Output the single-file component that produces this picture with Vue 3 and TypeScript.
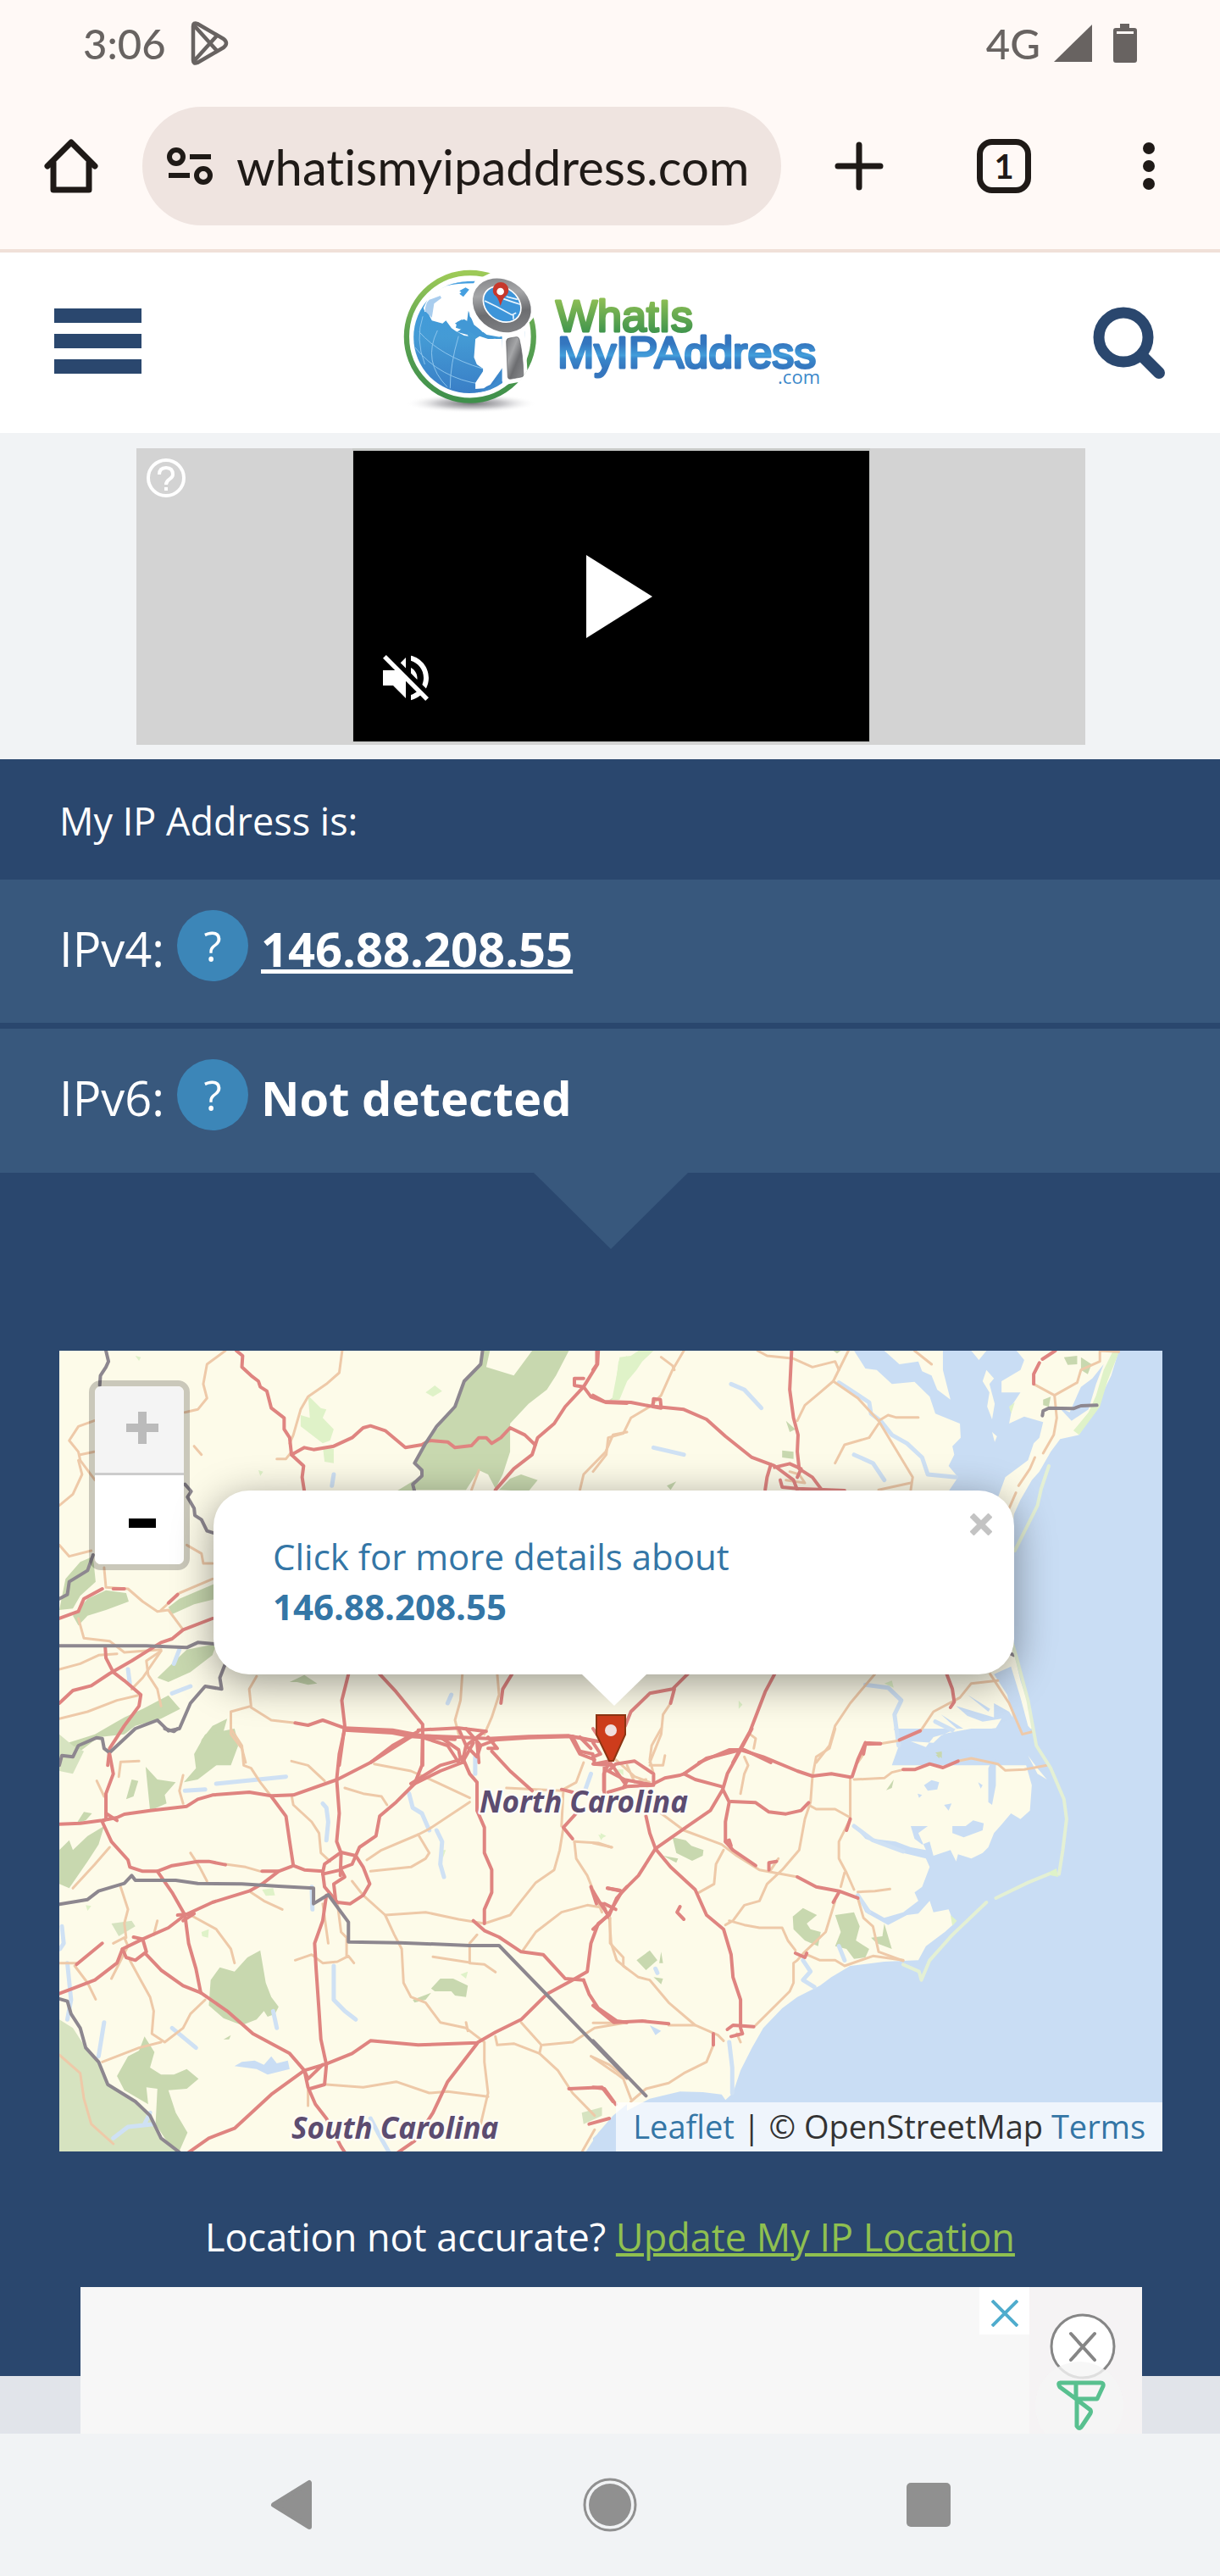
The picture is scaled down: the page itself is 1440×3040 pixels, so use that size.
<script setup lang="ts">
import { ref } from 'vue'

interface Area { fill: string; d: string }
interface Tile { id: string; transform: string; areas: Area[]; rivers: string[]; minor: string[]; major: string[]; borders: string[] }

const address = ref('whatismyipaddress.com')
const ip = '146.88.208.55'
const forest = '#c8d8af'
const park = '#dff2c8'
const water = '#c9ddf4'
const land = '#fdfbe9'

/* The basemap is stored as four quadrants, each in its own survey grid. */
const tiles: Tile[] = [
  {
    id: 'nw',
    transform: 'translate(60 1580) scale(.43367 .33333)',
    areas: [
      { fill: forest, d: 'M1175 42L1195 42 1185 100 1260 130 1310 42 1410 42 1375 130 1350 180 1300 230 1250 300 1250 400 1230 480 1210 530 1190 480 1165 465 1130 535 990 535 985 515 1010 480 990 440 1020 370 1100 240 1125 150 1170 90ZM1220 535L1250 495 1280 480 1325 500 1300 540ZM940 540L990 500 990 540ZM23 960L40 850 80 790 115 770 122 860 80 910 60 955ZM60 980L100 920 150 890 205 900 212 930 150 960 100 980 75 1015ZM320 950L350 920 450 865 450 920 390 940 330 975ZM290 1200L330 1150 370 1100 450 1080 440 1120 380 1180 320 1215ZM23 1440L120 1400 200 1340 250 1310 320 1262 352 1310 300 1345 230 1370 200 1400 130 1410 60 1480 23 1470ZM400 1510L410 1420 440 1370 480 1345 470 1390 510 1440 490 1510ZM650 1215L690 1190 725 1220 700 1225 670 1215ZM1520 215L1545 200 1545 215Z' },
      { fill: park, d: 'M700 200L735 245 750 250 740 280 770 320 760 360 740 370 680 310 680 270 705 280ZM740 380L770 390 770 440 745 435ZM1020 190L1045 165 1065 185 1040 205ZM1545 80L1568 60 1560 130 1550 200 1535 190ZM230 60L245 65 240 78ZM565 465L578 470 570 485Z' },
    ],
    rivers: ['M350 1100L335 1150', 'M380 1230L330 1255', 'M1090 1260L1080 1290', 'M210 1170L215 1220', 'M770 480L765 520'],
    minor: ['M475 42L425 90 415 160 425 210 400 250 365 260', 'M793 42L785 120 750 160 700 205 680 250 660 340 650 370', 'M118 290L75 310 50 360 75 400 80 430 120 500', 'M75 430L85 480 60 550 23 590', 'M80 410L118 400', 'M370 730L410 760 415 795 440 795', 'M145 810L150 880 210 885 250 930 290 965 320 960 360 1030', 'M300 960L350 900 440 850', 'M75 990L90 1060 160 1070 200 1110 300 1100', 'M23 1170L80 1150 130 1120 180 1115', 'M300 1105L260 1140 265 1190 290 1240 300 1300', 'M300 1105L250 1200 220 1240', 'M23 1345L100 1320 180 1280 245 1260', 'M560 1195L540 1240 545 1300 490 1320 490 1400 520 1450 530 1500', 'M545 1305L600 1350 665 1360', 'M1120 1187L1115 1280 1100 1350 1110 1400', 'M1215 1187L1220 1260 1200 1340 1180 1400', 'M1165 465L1145 535', 'M1568 330L1530 340 1510 400 1450 480 1440 535', 'M615 425L640 425 655 400', 'M390 380L410 410', 'M23 730L50 770 110 750'],
    major: ['M505 42L522 60 520 100 545 130 565 150 570 170 588 185 600 245 635 280 635 320 650 350 655 410 688 450 684 490 690 540', 'M655 410L690 385 715 392 770 380 820 350 850 315 870 308 910 325 965 385 1010 375 1030 360 1080 365 1100 385 1145 378 1165 350 1185 350 1200 370 1225 350 1250 315 1290 340 1318 375', 'M1490 42L1488 90 1450 170 1400 240 1370 300 1325 350 1310 410 1260 460 1210 535', 'M1450 170L1425 165 1425 140 1450 140M1450 170L1470 205 1510 225 1568 228', 'M23 1290L60 1245 110 1228 160 1185 220 1140 300 1075 330 1062 360 1030 440 990', 'M148 1090L150 1130 170 1180 200 1210 245 1260 240 1300 200 1370 175 1420 160 1450 155 1510', 'M23 990L75 965 90 920 140 885', 'M320 935L345 905M170 885L200 885', 'M810 1187L792 1280 800 1370 785 1510', 'M895 1187L940 1250 1012 1365 1012 1510', 'M665 1360L700 1368 740 1350 800 1378 930 1385 1010 1405 1110 1410 1190 1415 1300 1408 1410 1405 1480 1425', 'M1000 1390L930 1440 870 1500', 'M1255 1187L1230 1240 1225 1290', 'M1000 1385L1110 1378 1185 1390', 'M1010 1410L1080 1440 1110 1500M1110 1380L1130 1440 1180 1390M1150 1430L1120 1500M1160 1430L1165 1500M1190 1410L1215 1450 1190 1450', 'M1415 1410L1440 1470 1480 1490M1440 1410L1470 1450'],
    borders: ['M150 42L157 80 150 100 135 130 133 165', 'M1175 42L1170 90 1125 150 1100 240 1050 310 1020 370 990 440 1010 465 1010 485 985 515 990 540', 'M365 515L382 540 372 560 390 600 392 625 410 640 425 680 445 688', 'M115 765L100 820 50 860 45 905 23 920', 'M23 1087L260 1087 370 1093 400 1075 445 1080', 'M475 1150L460 1200 465 1240 420 1230 380 1290 350 1380 320 1388 290 1350 230 1380 160 1465 145 1450 140 1415 125 1412 75 1440 60 1480 30 1475 23 1510'],
  },
  {
    id: 'ne',
    transform: 'translate(700 1580) scale(.44643 .33333)',
    areas: [
      { fill: water, d: 'M690 42L720 105 750 110 790 160 850 152 890 205 905 265 970 300 972 350 950 380 955 410 940 450 965 490 940 540 1060 600 1090 490 1150 430 1165 370 1180 350 1190 295 1140 275 1100 300 1110 230 1130 190 1080 190 1080 150 1130 110 1140 75 1120 42 1040 42 1020 75 1000 42 925 42 925 110 945 215 910 180 895 130 870 115 860 80 810 90 770 42Z' },
      { fill: water, d: 'M1390 42L1370 130 1330 240 1285 340 1235 355 1210 400 1180 470 1160 500 1130 570 1113 620 1100 800 1113 1110 1130 1210 1155 1310 1165 1400 1215 1505 1568 1505 1568 42Z' },
      { fill: water, d: 'M1230 240L1260 260 1290 170 1320 140 1350 90 1330 160 1310 250 1265 290Z' },
      { fill: water, d: 'M790 1510L810 1435 870 1470 930 1420 1000 1390 1065 1378 1080 1345 1030 1355 990 1335 960 1300 1060 1340 1060 1290 1100 1320 1110 1340 1095 1260 1060 1187 1105 1160 1130 1270 1150 1370 1170 1400 1200 1510Z' },
      { fill: water, d: 'M920 1330L985 1385 970 1390ZM990 1260L1050 1310 1045 1320Z' },
      { fill: land, d: 'M1040 110L1060 140 1048 160 1062 230 1055 285 1042 240 1048 190 1030 150ZM1055 330L1068 345 1062 365Z' },
      { fill: park, d: 'M50 215L65 110 70 65 100 60 120 42 160 42 130 80 115 110 90 150 70 215ZM1375 42L1392 42 1360 150 1340 240 1285 340 1270 325 1310 260 1330 200 1350 110ZM1100 240L1115 225 1105 265ZM770 1220L790 1210 795 1235ZM385 1280L395 1295 385 1310Z' },
      { fill: forest, d: 'M1245 65L1280 60 1280 90 1255 92ZM1290 65L1318 90 1308 125 1290 110ZM195 520L220 505 205 535ZM1190 215L1210 205 1205 240 1190 235ZM510 290L535 320 520 330ZM500 395L530 400 530 425 500 420ZM900 1465L925 1460 915 1485ZM635 42L655 42 645 52Z' },
    ],
    rivers: ['M365 160L400 180 445 245', 'M650 155L730 225 735 265 760 290 790 340 830 370 870 420 885 480 960 490', 'M720 1225L780 1235 815 1280 797 1330 808 1440', 'M690 410L740 440 770 500', 'M160 385L240 410', 'M905 1355L950 1385'],
    minor: ['M240 42L210 110 180 200 150 240 100 280 80 335 40 350 35 410 0 470', 'M180 65L210 95 215 110', 'M435 42L460 60 530 70 580 100 640 80 650 110', 'M675 42L635 150 600 190 560 235 540 290', 'M635 150L700 210 755 290 800 390 845 490 840 535', 'M755 290L780 270 800 278 860 278', 'M755 300L730 350 665 375 640 440', 'M850 42L895 90', 'M755 535L840 510', 'M1165 160L1220 200 1280 155 1290 110 1340 80 1340 42 1390 46', 'M1220 200L1226 280 1218 340 1190 405', 'M1168 420L1155 460 1125 520M1118 545L1100 600', 'M205 1290L185 1330 180 1400 150 1500', 'M745 1187L680 1290 640 1370 625 1440 590 1500', 'M1050 1187L1100 1290 1135 1400 1165 1390', 'M1070 1210L1000 1220 970 1270 900 1320 865 1390 810 1422 760 1433', 'M415 1400L430 1415 425 1450', 'M715 1470L700 1500', 'M520 470L545 480 560 510 510 500'],
    major: ['M10 42L10 90 0 110', 'M0 200L30 222 100 225 150 238 240 250 300 285 350 345 420 420 480 450 530 500 540 535', 'M525 42L520 180 530 280 542 340 540 400 545 460 580 490 605 535', 'M160 212L178 215 180 245 158 240Z', 'M470 445L460 490 455 535', 'M480 455L520 442 550 460 540 490', 'M495 500L500 525 540 530 665 537', 'M1222 42L1188 72M1180 85L1165 125 1165 160', 'M250 1187L210 1240 150 1255 100 1320 85 1370', 'M215 1240L205 1290', 'M480 1187L455 1250 415 1390 390 1450 370 1500', 'M280 1500L360 1455 400 1455 470 1500', 'M935 1187L950 1240 955 1285 945 1305', 'M865 1388L810 1420', 'M760 1433L720 1435 715 1470', 'M0 1430L20 1470 0 1480'],
    borders: ['M1188 272L1190 255 1205 245 1270 247 1290 237 1332 235', 'M1098 1110L1112 1120'],
  },
  {
    id: 'sw',
    transform: 'translate(60 2040) scale(.43367 .33333)',
    areas: [
      { fill: '#d6e3c0', d: 'M23 1030L60 1060 95 1130 130 1180 155 1260 230 1320 270 1370 300 1450 355 1510 23 1510Z' },
      { fill: forest, d: 'M435 890L460 845 500 860 535 810 570 785 585 900 600 950 620 985 610 1010 590 1020 580 1000 560 1030 520 1050 470 1025 430 980ZM180 1230L210 1160 240 1140 255 1090 282 1145 270 1200 300 1225 335 1225 370 1205 402 1240 370 1275 320 1280 340 1360 372 1430 345 1510 310 1450 285 1400 290 1275 260 1270 265 1330 200 1280ZM23 430L50 395 60 430 100 380 145 345 130 410 100 470 50 565 23 550ZM258 135L290 180 340 190 310 235 315 265 270 290ZM362 190L395 140 390 90 420 20 500 0 510 50 490 90 440 140 400 180ZM205 250L220 180 238 185 225 240ZM1035 920L1060 885 1095 885 1135 910 1130 950 1100 945 1090 930 1045 930ZM70 335L90 295 112 300 95 325ZM985 960L1035 935 1020 960 990 970ZM470 1100L490 1085 485 1100Z' },
      { fill: '#d6e3c0', d: 'M23 20L60 60 90 80 60 160 23 150ZM165 690L220 680 230 700 185 735ZM1445 1360L1500 1340 1500 1370 1450 1400Z' },
      { fill: park, d: 'M575 570L605 565 610 590 585 592ZM410 720L430 710 428 740 412 735ZM1115 870L1135 860 1130 885ZM1490 375L1505 380 1498 395ZM1060 430L1075 430 1068 455ZM95 625L110 628 100 645Z' },
      { fill: water, d: 'M1450 1510L1490 1430 1530 1370 1568 1330 1568 1510Z' },
      { fill: water, d: 'M555 1175L580 1190 600 1160 615 1185 645 1175 650 1205 620 1215 590 1225 560 1205 500 1195 520 1180Z' },
    ],
    rivers: ['M740 265L750 280 755 330 750 395', 'M770 840L770 960 800 1000 830 1030', 'M1050 360L1065 400 1060 480 1070 525', 'M975 230L985 280 1010 300 1030 360', 'M330 1060L395 1130', 'M170 1450L210 1410 280 1400M270 1360L255 1400', 'M870 1380L890 1430 925 1510', 'M45 830L55 960 45 1030', 'M365 220L420 215', 'M605 1000L615 1060', 'M30 700L35 760 25 780', 'M450 195L640 170', 'M1470 160L1455 215', 'M145 1040L130 1160', 'M710 560L712 640', 'M1155 100L1155 160'],
    minor: ['M490 0L520 60 525 130 545 140 570 190 600 240', 'M655 235L660 270 710 330 730 370 735 440 760 470', 'M655 115L700 130 745 185', 'M800 210L850 230 900 240 915 270', 'M880 125L980 150 1050 190 1140 245', 'M1140 260L1030 355 1000 375 900 430 860 465', 'M1000 375L1030 440 1020 460 980 490 870 505', 'M820 540L850 590 910 660 935 730 955 780 960 900 980 950 1020 970 1060 1040 1130 1060 1180 1110 1180 1180 1190 1290 1170 1400', 'M910 660L1020 650 1110 675 1180 690 1250 660 1280 610 1320 545 1370 500 1385 430 1395 350', 'M1160 730L1140 760 1140 830 1180 835 1210 862', 'M1040 808L1140 828', 'M475 480L530 490 570 505 620 505', 'M380 440L405 490 425 540', 'M160 420L120 480 60 565', 'M190 560L210 640 200 690 205 740', 'M215 820L240 880 270 950 280 1000 275 1080 310 1110 360 1060 380 1010 420 960', 'M380 660L450 710 490 780 500 830', 'M545 580L580 610 630 640', 'M665 820L710 800 740 830 780 825 810 805 825 830', 'M780 620L790 720 805 740 805 805', 'M740 620L755 760', 'M750 1260L850 1270 940 1250 1030 1290 1080 1285 1190 1303', 'M1280 1040L1335 1120 1330 1150 1380 1210 1420 1290 1480 1370', 'M1210 1090L1215 1120 1260 1115 1330 1150', 'M1340 1120L1420 1110 1480 1060 1568 1040', 'M1285 785L1320 720 1390 650 1460 625 1510 635', 'M1520 670L1525 760 1540 820 1568 850', 'M1425 400L1430 460 1460 520 1500 650', 'M1425 400L1490 405 1525 420', 'M23 830L70 830M65 840L100 900 122 958', 'M140 1180L240 1130 300 1110', 'M23 1155L80 1220 90 1310 110 1400 170 1470', 'M125 185L145 240', 'M240 115L190 118 185 170', 'M360 165L350 220 360 265', 'M1450 120L1430 190 1395 215 1390 345', 'M1470 1160L1520 1190 1568 1240', 'M1240 210L1390 220', 'M170 760L200 740 210 770 165 885', 'M700 1280L700 1335', 'M1480 1420L1445 1500', 'M290 680L280 730', 'M1130 1040L1135 1070'],
    major: ['M160 90L170 160 150 230 150 320 140 330 165 400 210 465 215 490 250 505 290 505 330 485 400 470 430 470 475 482', 'M23 338L80 335 140 325 180 315 200 303 270 290 370 275 400 250 440 235 540 225 600 238 660 235 780 180 870 120 930 70 985 25', 'M150 300L180 325', 'M600 240L640 310 650 400 660 485 690 500 740 505', 'M800 0L785 90 778 180 785 300 778 400 790 440 788 520', 'M800 5L930 15 980 28 1100 38', 'M1012 20L1010 130 990 195 1060 150 1120 120 1130 60', 'M1170 60L1210 40 1300 32 1420 28 1490 45', 'M1130 0L1170 60 1160 100 1130 60M1120 100L1140 160 1160 190 1160 290 1180 350 1180 440 1200 500 1200 580 1180 640 1180 690', 'M1060 30L1110 75 1115 110 1060 130 980 195', 'M1200 80L1250 150 1310 220', 'M1150 680L1180 715 1220 738 1280 790 1340 800 1400 885 1450 890', 'M990 195L940 260 895 310 885 380 840 420 820 480 790 495', 'M745 480L790 438 830 450 850 490 868 550 850 590 815 620 780 615 745 560 740 510Z', 'M740 515L790 500 800 525 770 550 775 605', 'M750 590L740 680 718 760 722 850 730 1000 735 1100 750 1190 745 1260 705 1275', 'M23 938L60 920 120 890 180 830 195 780 250 745 320 705 365 660 440 615 540 575 575 550 620 505 655 488', 'M575 505L620 505', 'M140 760L70 835', 'M195 780L205 810 230 820 260 790 250 745 225 738', 'M290 505L330 580 365 660 375 760 395 850 408 935', 'M345 660L390 655 360 680', 'M260 800L300 855 360 910 408 935 480 1000 550 1080 650 1150 690 1210 700 1270 720 1330 750 1380 790 1480 805 1510', 'M370 1505L430 1450 500 1415 600 1295 690 1210 750 1187 820 1150 870 1105 1000 1120 1160 1112 1210 1075 1280 1030 1350 940 1420 890 1460 860 1470 760 1490 690 1520 660 1540 600 1568 560', 'M690 1210L700 1240 740 1190', 'M1160 1115L1080 1250 1040 1360 990 1460 940 1505', 'M1450 890L1465 940 1490 990 1540 1035 1568 1040', 'M1420 28L1440 80 1475 90 1480 125 1520 115 1560 190', 'M1520 120L1505 160 1505 220', 'M1430 300L1395 350 1420 390', 'M1390 215L1420 225', 'M1410 1275L1500 1270 1530 1320', 'M1465 1400L1520 1380', 'M1470 560L1485 620M1515 565L1548 572M1500 620L1520 670'],
    borders: ['M23 622L100 605 130 575 200 548 220 520 230 537 340 537 400 548 520 550 620 558 715 565 715 620 755 588 810 685 810 755 950 758 1140 768 1220 768 1568 1235', 'M23 957L45 965 55 1010 80 1060 95 1130 130 1180 155 1260 230 1320 270 1370 300 1450 355 1505', 'M310 0L335 10 345 0'],
  },
  {
    id: 'se',
    transform: 'translate(700 2040) scale(.44643 .33333)',
    areas: [
      { fill: water, d: 'M795 0L815 60 800 98 900 97 940 78 1030 70 1060 95 1045 140 1045 260 1055 270 1065 200 1065 110 1090 85 1130 90 1145 130 1160 200 1155 290 1130 320 1105 300 1080 340 1060 370 1045 420 1030 440 1000 460 965 445 960 470 945 430 900 450 890 400 870 410 850 390 840 345 885 345 860 370 880 430 840 420 800 400 740 390 690 345 720 390 820 440 880 460 890 490 870 560 850 580 860 610 820 650 770 670 730 640 700 600 720 650 780 695 830 660 860 655 890 610 900 650 940 640 955 690 930 720 880 770 860 820 770 825 680 840 630 880 600 910 540 950 500 990 450 1060 420 1130 390 1210 370 1290 350 1315 340 1295 290 1287 230 1285 150 1310 80 1360 40 1400 0 1450 0 1510 1568 1510 1568 0Z' },
      { fill: land, d: 'M840 45L900 50 920 25 960 0 1000 0 940 15 900 30 880 65ZM1150 95L1175 140 1200 180 1175 160Z' },
      { fill: forest, d: 'M210 385L245 395 260 415 292 430 290 450 262 468 220 440ZM528 665L555 635 592 660 565 690 575 710 602 720 595 770 560 750 530 710ZM640 660L690 650 705 700 695 750 730 780 720 810 690 815 670 780 640 770 655 720ZM735 740L765 735 770 690 790 780 750 760ZM115 820L150 785 170 820 140 855ZM775 218L795 180 790 210ZM905 85L922 80 922 105ZM160 880L185 885 180 905ZM185 450L225 460 220 475ZM180 790L185 830 175 830Z' },
      { fill: park, d: 'M945 660L962 680 950 698ZM1195 515L1225 495 1230 525ZM60 145L80 145 80 165ZM20 370L35 380 20 390Z' },
      { fill: water, d: 'M875 200L895 182 915 190 910 215 885 220ZM950 345L985 345 1005 325 1033 335 1030 360 980 385 950 370ZM928 270L948 265 940 290ZM150 1050L180 1070 165 1085ZM858 230L870 235 862 245ZM1018 190L1030 200 1025 212Z' },
    ],
    rivers: ['M555 820L575 860 555 890 585 915', 'M360 1110L368 1200 368 1290', 'M690 345L740 395 820 435', 'M650 770L665 820', 'M700 590L730 650', 'M165 850L170 865'],
    minor: ['M180 0L155 60 150 110 160 160', 'M60 110L110 170 150 190M90 130L110 190 140 180M190 95L185 130 150 130', 'M640 0L625 70 590 100 580 170 575 260 560 320 545 430 500 500 460 550 440 610 400 625 370 680 350 695', 'M570 270L590 285 640 285 680 315', 'M680 172L680 320 650 400 650 460 670 510 690 570', 'M700 600L715 670 740 700 755 790 820 822', 'M690 180L770 175 790 155 820 145', 'M965 115L1000 105 1070 125 1090 148 1140 145 1200 130', 'M400 100L410 130 400 160 390 230', 'M180 300L240 360 340 410 380 450 440 500 540 525', 'M345 430L325 480 320 550 280 580', 'M360 680L400 695 440 705 500 705 515 750 535 785', 'M640 610L615 720 560 790 540 820 530 830 530 900 520 930 430 1050', 'M565 800L600 820 640 820 665 840 740 805 820 820', 'M665 510L655 560', 'M700 578L745 575 785 568', 'M45 670L45 760 80 810 80 840 120 880 150 890 200 970 270 1050 330 1085 345 1105', 'M0 1042L60 1042M200 1050L270 1050', 'M318 1120L300 1180 240 1220 200 1255 140 1275 100 1320', 'M0 1165L60 1220 80 1240 100 1310', 'M0 405L50 420', 'M470 500L490 460', 'M380 1080L390 1110'],
    major: ['M420 0L390 75 355 160 343 215 360 260 350 330 350 400 370 430 430 485', 'M240 160L300 105 390 75 450 100 540 150 580 168 630 160 680 172', 'M160 195L190 175 230 165 240 160 270 180 340 205', 'M343 215L310 290 245 350 165 425 120 520 75 580 40 660 0 710', 'M365 258L430 262 465 295 510 302 550 290 570 262', 'M140 310L150 370 165 425 205 490 270 570 300 660 345 710 365 800 370 880 390 960 390 1060 395 1080 365 1090', 'M355 1065L370 1050 425 1055', 'M350 400L360 395 365 415', 'M540 525L590 560 650 575 700 600', 'M650 580L635 615', 'M820 145L850 145 890 125 925 138 965 115', 'M680 320L670 360', 'M535 795L560 810 565 795', 'M720 50L700 110 685 170M720 50L760 53', 'M0 980L55 1040 130 1035 200 1045', 'M318 1080L318 1120', 'M0 1270L30 1275 60 1330', 'M465 500L465 475 485 470', 'M230 630L222 650 240 675', 'M30 130L30 230M45 145L60 125 110 115 160 160 160 200 90 205 40 225M40 150L90 185 80 210M0 125L50 130M80 180L160 200', 'M38 565L75 575M0 575L20 620 40 660M30 620L60 640', 'M0 0L20 40'],
    borders: ['M0 1105L140 1300'],
  },
]
</script>

<template>
  <div class="screen">
    <header class="browser">
      <div class="status">
        <div class="status-side">
          <span>3:06</span>
          <svg width="48" height="52" viewBox="0 0 48 52" fill="none" stroke="#686361" stroke-width="4.5" stroke-linejoin="round" aria-hidden="true">
            <path d="M4 6Q4 1 9 3L40 21Q46 26 40 31L9 49Q4 51 4 46ZM5 5L33 36M5 47L33 16" />
          </svg>
        </div>
        <div class="status-side right">
          <span>4G</span>
          <svg width="46" height="46" viewBox="0 0 46 46" aria-hidden="true"><path d="M0 45L45 1V45Z" fill="#686361" /></svg>
          <svg class="battery" width="28" height="46" viewBox="0 0 28 46" aria-hidden="true">
            <path d="M8 0H19V5H25Q28 5 28 8V43Q28 46 25 46H3Q0 46 0 43V8Q0 5 3 5H8Z" fill="#686361" /><path d="M4 9H24V12H4Z" fill="#fff9f6" />
          </svg>
        </div>
      </div>
      <nav class="toolbar" aria-label="Browser">
        <button type="button" aria-label="Home">
          <svg viewBox="0 0 64 64" fill="none" stroke="#1f1a17" stroke-width="7" stroke-linejoin="round" stroke-linecap="round">
            <path d="M4 32L32 4 60 32M11 28V60H53V28" />
          </svg>
        </button>
        <label class="omnibox">
          <svg width="54" height="44" viewBox="0 0 54 44" fill="none" stroke="#1f1a17" stroke-width="6" aria-hidden="true">
            <circle cx="11" cy="11" r="8" /><circle cx="43" cy="33" r="8" /><path d="M27 11H52M2 33H27" />
          </svg>
          <input v-model="address" type="text" aria-label="Address">
        </label>
        <div class="actions">
          <button type="button" aria-label="New tab">
            <svg viewBox="0 0 64 64" stroke="#1f1a17" stroke-width="7" stroke-linecap="round"><path d="M7 32H57M32 7V57" /></svg>
          </button>
          <button type="button" class="tabs" aria-label="1 open tab">1</button>
          <button type="button" aria-label="Menu">
            <svg viewBox="0 0 64 64" fill="#1f1a17"><circle cx="32" cy="11" r="7" /><circle cx="32" cy="32" r="7" /><circle cx="32" cy="53" r="7" /></svg>
          </button>
        </div>
      </nav>
    </header>

    <div class="site-head">
      <button type="button" class="burger" aria-label="Open menu"><i></i><i></i><i></i></button>
      <a href="#" class="logo" aria-label="WhatIsMyIPAddress.com">
        <svg width="520" height="200" viewBox="0 0 520 200">
          <defs>
            <linearGradient id="ring" x1="0" y1="0" x2="0" y2="1"><stop offset="0" stop-color="#9dca57" /><stop offset=".45" stop-color="#5da452" /><stop offset="1" stop-color="#3f904b" /></linearGradient>
            <linearGradient id="sea" x1="0" y1="0" x2="0" y2="1"><stop offset="0" stop-color="#3f9ade" /><stop offset=".5" stop-color="#449bd5" /><stop offset="1" stop-color="#397ec6" /></linearGradient>
            <linearGradient id="metal" x1="0" y1="0" x2="1" y2="1"><stop offset="0" stop-color="#77787b" /><stop offset=".35" stop-color="#a5a6a8" /><stop offset=".6" stop-color="#6c6d70" /><stop offset="1" stop-color="#8a8b8e" /></linearGradient>
            <linearGradient id="leaf" gradientUnits="userSpaceOnUse" x1="0" y1="53" x2="0" y2="93"><stop offset="0" stop-color="#8dbe54" /><stop offset="1" stop-color="#3f944d" /></linearGradient>
            <linearGradient id="sky" gradientUnits="userSpaceOnUse" x1="0" y1="96" x2="0" y2="145"><stop offset="0" stop-color="#3374bd" /><stop offset=".2" stop-color="#3476bf" /><stop offset=".48" stop-color="#429edb" /><stop offset=".55" stop-color="#3987cb" /><stop offset=".8" stop-color="#3576be" /></linearGradient>
            <radialGradient id="shade"><stop offset="0" stop-color="#77777c" /><stop offset=".5" stop-color="#c8c8cb" /><stop offset="1" stop-color="#fff" stop-opacity="0" /></radialGradient>
          </defs>
          <g transform="scale(.3316 .3333)">
            <ellipse cx="290" cy="528" rx="235" ry="34" fill="url(#shade)" />
            <circle cx="286" cy="292" r="226" fill="#fff" stroke="url(#ring)" stroke-width="19" />
            <circle cx="283" cy="294" r="198" fill="url(#sea)" />
            <g fill="none" stroke="#8cc4ec" stroke-width="3">
              <path d="M105 275Q180 360 330 405M90 330Q180 440 325 460M170 270Q115 380 205 470M245 290Q215 390 215 475M118 220Q90 300 125 390" />
            </g>
            <path d="M145 150Q190 100 305 92L400 150 400 290 370 300 345 288 330 290 318 268 300 262 283 245 278 195 290 245 265 230 240 240 235 260 265 270 280 290 265 288 235 272 220 262 200 235 188 245 150 235 140 215 150 190 125 205 120 190 135 160Z" fill="#fff" />
            <path d="M200 112Q245 95 305 95L300 103Q240 103 200 112ZM248 130L270 118 283 125 262 151 248 140 255 135Z" fill="#459fe0" />
            <path d="M125 200Q130 160 150 158L180 147 184 155 158 175 150 225Z" fill="#a9cdee" />
            <path d="M232 245L255 232 275 238 280 200 300 250 345 285 400 295 350 303 310 290 280 270 275 285 240 275 260 262Z" fill="#4298d5" />
            <path d="M305 300L320 290 350 300 400 300 403 400 358 462 345 468 335 475 305 477 305 455 332 415 332 405 310 390 300 365Z" fill="#fff" />
            <path d="M345 474Q385 455 401 418V456Q360 486 310 490Z" fill="#3f8bcd" />
            <path d="M383 55L480 110 520 160 512 225 480 260 490 412 462 452 410 462 400 450 400 292 330 275 285 220 280 140 305 92Z" fill="#fff" />
            <ellipse cx="399" cy="181" rx="109" ry="90" transform="rotate(32 399 181)" fill="url(#metal)" />
            <ellipse cx="400" cy="177" rx="75" ry="60" transform="rotate(38 400 177)" fill="#fff" />
            <ellipse cx="400" cy="177" rx="70" ry="55" transform="rotate(38 400 177)" fill="#3d95d9" />
            <path d="M338 165L380 185 435 215 450 208M405 158L440 170 465 178M415 150L455 160M440 215L440 230" fill="none" stroke="#e8f5ff" stroke-width="5" />
            <path d="M394 183Q386 150 372 143A28 28 0 1 1 418 143Q403 152 394 183Z" fill="#c7382c" />
            <circle cx="394" cy="132" r="13" fill="#fff" />
            <path d="M415 308Q416 298 426 297L450 293Q458 292 461 300 474 350 476 425 477 434 468 435L430 442Q421 443 420 434Z" fill="url(#metal)" stroke="#626366" stroke-width="2" />
          </g>
          <g font-family="Liberation Sans, Arial, sans-serif" font-size="52" stroke-linejoin="round" stroke-width="3">
            <text x="196" y="91" fill="url(#leaf)" stroke="url(#leaf)">WhatIs</text>
            <text x="198" y="134" fill="url(#sky)" stroke="url(#sky)">MyIPAddress</text>
          </g>
          <text x="508" y="153" text-anchor="end" font-family="Open Sans, sans-serif" font-size="22" fill="#3c88ca">.com</text>
        </svg>
      </a>
      <button type="button" class="search" aria-label="Search">
        <svg width="86" height="86" viewBox="0 0 86 86" fill="none" stroke="#2a476e">
          <circle cx="36" cy="36" r="29" stroke-width="13" /><path d="M58 58L78 78" stroke-width="14" stroke-linecap="round" />
        </svg>
      </button>
    </div>

    <section class="promo" aria-label="Video">
      <div class="promo-box">
        <button type="button" class="about" aria-label="About this ad">
          <svg width="48" height="48" viewBox="0 0 48 48" fill="none" stroke="#fff" stroke-width="4"><circle cx="24" cy="24" r="21" /><path d="M16 20Q16 12 24 12T32 20C32 26 24 25 24 32M24 35V39" /></svg>
        </button>
        <div class="video">
          <button type="button" class="play" aria-label="Play"><svg width="78" height="98" viewBox="0 0 78 98"><path d="M0 0L78 49 0 98Z" fill="#fff" /></svg></button>
          <button type="button" class="mute" aria-label="Unmute">
            <svg width="54" height="54" viewBox="3 3 18 18" fill="#fff"><path d="M16.500 12c0-1.770-1.020-3.290-2.500-4.030v2.210l2.450 2.450c.03-.2.050-.41.050-.63zm2.500 0c0 .94-.2 1.820-.54 2.640l1.510 1.510C20.630 14.910 21 13.500 21 12c0-4.280-2.990-7.860-7-8.770v2.060c2.890.86 5 3.540 5 6.710zM4.270 3L3 4.270 7.730 9H3v6h4l5 5v-6.730l4.250 4.250c-.67.52-1.420.93-2.250 1.180v2.060c1.380-.31 2.630-.95 3.690-1.810L19.730 21 21 19.730l-9-9L4.270 3zM12 4L9.910 6.090 12 8.180V4z" /></svg>
          </button>
        </div>
      </div>
    </section>

    <main>
      <section class="panel">
        <h1>My IP Address is:</h1>
        <div class="row">
          <span>IPv4:</span><button type="button" class="hint" aria-label="What is IPv4?">?</button><a href="#" class="value">{{ ip }}</a>
        </div>
        <div class="row last">
          <span>IPv6:</span><button type="button" class="hint" aria-label="What is IPv6?">?</button><span class="value">Not detected</span>
        </div>

        <div class="map">
          <svg class="basemap" viewBox="70 1594 1302 945" preserveAspectRatio="xMidYMid slice" role="img" aria-label="Map of North Carolina">
            <rect x="70" y="1594" width="1302" height="945" :fill="land" />
            <g v-for="t in tiles" :key="t.id" :transform="t.transform">
              <path v-for="(a, i) in t.areas" :key="i" :d="a.d" :fill="a.fill" />
            </g>
            <g v-for="t in tiles" :key="t.id" :transform="t.transform" class="lines">
              <path v-for="(d, i) in t.rivers" :key="'w' + i" :d="d" class="river" />
              <path v-for="(d, i) in t.minor" :key="'m' + i" :d="d" class="minor" />
              <path v-for="(d, i) in t.major" :key="'r' + i" :d="d" class="major" />
              <path v-for="(d, i) in t.borders" :key="'b' + i" :d="d" class="border" />
            </g>
            <g class="lines" fill="none" transform="translate(700 2040) scale(.44643 .33333)">
              <path class="banks" d="M1100 -340L1120 -250 1150 -100 1172 60 1210 140 1245 250 1252 320 1242 430 1232 515M1205 515L1150 545 1065 600M1040 615L950 730 890 820 868 890 862 860 820 835" />
            </g>
            <g class="lines" fill="none" transform="translate(700 1580) scale(.44643 .33333)">
              <path class="banks" d="M1205 450L1185 530 1175 590 1145 670 1115 750" />
            </g>
            <g class="place">
              <text x="566" y="2139">North Carolina</text>
              <text x="344" y="2524">South Carolina</text>
            </g>
            <path d="M704 2024H738V2047L724 2078H719L704 2047Z" fill="#cd3c1c" stroke="#8c3513" stroke-width="2" />
            <circle cx="721" cy="2042" r="7" fill="#f0dfdf" />
          </svg>

          <div class="zoom">
            <button type="button" aria-label="Zoom in" disabled><svg width="38" height="38" viewBox="0 0 38 38"><path d="M14 0H24V14H38V24H24V38H14V24H0V14H14Z" fill="#bbb" /></svg></button>
            <button type="button" aria-label="Zoom out"><svg width="32" height="38" viewBox="0 0 32 38"><path d="M0 17H32V28H0Z" /></svg></button>
          </div>

          <div class="popup">
            <a href="#">Click for more details about<br><b>{{ ip }}</b></a>
            <button type="button" class="close" aria-label="Close popup"><svg width="26" height="26" viewBox="0 0 26 26" stroke="#c3c3c3" stroke-width="7"><path d="M2 2L24 24M24 2L2 24" /></svg></button>
          </div>

          <p class="credit"><a href="#">Leaflet</a> | © OpenStreetMap <a href="#">Terms</a></p>
        </div>

        <p class="update">Location not accurate? <a href="#">Update My IP Location</a></p>
      </section>
      <div class="below"></div>

      <aside class="banner" aria-label="Advertisement">
        <button type="button" class="banner-x" aria-label="Ad options">
          <svg width="32" height="32" viewBox="0 0 32 32" stroke="#4faccd" stroke-width="4"><path d="M1 1L31 31M31 1L1 31" /></svg>
        </button>
        <div class="banner-side">
          <svg width="133" height="173" viewBox="0 0 133 173" fill="none" aria-hidden="true">
            <circle cx="63" cy="70" r="37" fill="#fff" stroke="#868686" stroke-width="3" />
            <path d="M49 55L77 86M77 55L49 86" stroke="#868686" stroke-width="4" stroke-linecap="round" />
            <circle cx="59" cy="140" r="52" fill="#f5f5f5" fill-opacity=".8" />
            <path d="M36 113H84Q88 113 87 117L80 132H55M55 132V113M55 132L36 118Q33 113 37 113M55 132L72 145Q73 147 72 149L62 164Q59 169 56 164V134" stroke="#58c08f" stroke-width="5" stroke-linejoin="round" />
          </svg>
        </div>
      </aside>
    </main>

    <nav class="system" aria-label="System navigation">
      <button type="button" aria-label="Back"><svg viewBox="0 0 64 64"><path d="M53 6V58L11 32Z" fill="#909090" stroke="#909090" stroke-width="6" stroke-linejoin="round" /></svg></button>
      <button type="button" aria-label="Home"><svg viewBox="0 0 64 64"><circle cx="32" cy="32" r="30" fill="none" stroke="#909090" stroke-width="3" /><circle cx="32" cy="32" r="25" fill="#909090" /></svg></button>
      <button type="button" aria-label="Recent apps"><svg viewBox="0 0 64 64"><rect x="6" y="6" width="52" height="52" rx="5" fill="#909090" /></svg></button>
    </nav>
  </div>
</template>

<style>
body {
  background: #f1f3f5;
}
</style>

<style scoped>
* {
  box-sizing: border-box;
}
.screen {
  font-family: 'Open Sans', 'Noto Sans', sans-serif;
  color: #fff;
}
button {
  display: block;
  padding: 0;
  border: 0;
  background: none;
  font: inherit;
  color: inherit;
  flex: none;
}
svg {
  display: block;
}
p, h1 {
  margin: 0;
  font-weight: 400;
}
.browser {
  background: #fff9f6;
  border-bottom: 4px solid #f0e0d8;
  font-family: Lato, Roboto, sans-serif;
}
.status {
  display: flex;
  justify-content: space-between;
  align-items: center;
  height: 102px;
  padding: 0 98px;
  color: #686361;
  font-size: 49px;
  font-weight: 500;
}
.status-side {
  display: flex;
  align-items: center;
  gap: 28px;
}
.status-side.right {
  gap: 16px;
}
.battery {
  margin-left: 8px;
}
.toolbar {
  display: flex;
  align-items: center;
  height: 192px;
  padding: 24px 52px 28px;
}
.toolbar button {
  width: 64px;
  height: 64px;
}
.omnibox {
  display: flex;
  align-items: center;
  flex: 1;
  min-width: 0;
  height: 140px;
  margin: 0 60px 0 52px;
  padding: 0 12px 0 29px;
  gap: 28px;
  border-radius: 70px;
  background: #efe4e0;
}
.omnibox svg {
  flex: none;
}
.omnibox input {
  flex: 1;
  min-width: 0;
  padding: 0;
  border: 0;
  outline: 0;
  background: none;
  font: 400 58px Lato, Roboto, sans-serif;
  font-variant-ligatures: none;
  color: #1f1a17;
}
.actions {
  display: flex;
  gap: 107px;
}
.toolbar .tabs {
  border: 7px solid #1f1a17;
  border-radius: 18px;
  color: #1f1a17;
  font-size: 40px;
  font-weight: 700;
  line-height: 48px;
}
.site-head {
  display: grid;
  grid-template-columns: 1fr auto 1fr;
  align-items: center;
  height: 213px;
  padding: 2px 64px 11px;
  background: #fff;
}
.burger {
  display: grid;
  gap: 13px;
  width: 103px;
  margin-top: 4px;
}
.burger i {
  height: 17px;
  background: #2a476e;
}
.search {
  justify-self: end;
  margin-top: 10px;
}
.promo {
  padding: 18px 159px 17px 161px;
  background: #f1f3f5;
}
.promo-box {
  position: relative;
  height: 350px;
  background: #d3d3d3;
}
.about {
  position: absolute;
  left: 11px;
  top: 11px;
}
.video {
  position: relative;
  display: grid;
  place-items: center;
  width: 611px;
  height: 347px;
  margin: 0 auto;
  border: solid #c8cac8;
  border-width: 3px 1px 1px;
  background: #000;
}
.play {
  margin-left: 20px;
}
.mute {
  position: absolute;
  left: 35px;
  bottom: 48px;
}
main {
  position: relative;
}
.panel {
  padding-bottom: 105px;
  background: #2a476e;
}
h1 {
  padding: 4px 70px 0;
  font-size: 45px;
  line-height: 138px;
}
.row {
  position: relative;
  display: flex;
  gap: 15px;
  height: 169px;
  margin-bottom: 7px;
  padding: 36px 70px 0;
  background: #38587d;
  font-size: 56px;
  line-height: 90px;
}
.row.last {
  height: 170px;
  margin-bottom: 210px;
}
.row.last::after {
  content: '';
  position: absolute;
  left: 50%;
  top: 100%;
  margin-left: -90px;
  border: solid transparent;
  border-width: 90px 91px 0;
  border-top-color: #38587d;
}
.hint {
  width: 84px;
  height: 84px;
  border-radius: 50%;
  background: #3c86b8;
  font-size: 49px;
  line-height: 80px;
}
.value {
  color: #fff;
  font-weight: 700;
}
a.value {
  text-decoration-thickness: 5px;
  text-decoration-skip-ink: none;
}
.map {
  position: relative;
  margin: 0 68px 0 70px;
  aspect-ratio: 1302 / 945;
  overflow: hidden;
}
.basemap {
  width: 100%;
  height: 100%;
}
.lines path {
  fill: none;
  stroke-linejoin: round;
  stroke-linecap: round;
  vector-effect: non-scaling-stroke;
}
.lines .river {
  stroke: #cfe1f4;
  stroke-width: 5px;
}
.lines .minor {
  stroke: #eec9a8;
  stroke-width: 3px;
}
.lines .major {
  stroke: #df8480;
  stroke-width: 4px;
}
.lines .border {
  stroke: #8d878f;
  stroke-width: 4px;
}
.lines .banks {
  stroke: #e4f0d4;
  stroke-width: 4px;
}
.place {
  font: italic 700 35px 'Noto Sans', 'Open Sans', sans-serif;
  fill: #5c4c70;
  stroke: #fdfbf5;
  stroke-width: 5px;
  stroke-linejoin: round;
  paint-order: stroke;
}
.zoom {
  position: absolute;
  left: 35px;
  top: 35px;
  border: 7px solid rgba(0, 0, 0, 0.2);
  border-radius: 14px;
  background-clip: padding-box;
}
.zoom button {
  display: grid;
  place-items: center;
  width: 105px;
  height: 105px;
  padding-left: 6px;
  background: #fff;
  border-radius: 0 0 7px 7px;
}
.zoom button:first-child {
  padding-bottom: 4px;
  border-bottom: 3px solid #ccc;
  border-radius: 7px 7px 0 0;
  background: #f4f4f4;
}
.popup {
  position: absolute;
  left: 182px;
  right: 175px;
  bottom: 563px;
  padding: 48px 70px 51px;
  border-radius: 42px;
  background: #fff;
  box-shadow: 0 10px 48px rgba(0, 0, 0, 0.4);
  font-size: 42px;
  line-height: 59px;
}
.popup::after {
  content: '';
  position: absolute;
  left: 50%;
  top: 100%;
  margin-left: -38px;
  border: solid transparent;
  border-width: 37px 38px 0;
  border-top-color: #fff;
}
.popup a, .credit a {
  color: #3476a6;
  text-decoration: none;
}
.close {
  position: absolute;
  right: 26px;
  top: 27px;
}
.credit {
  position: absolute;
  right: 0;
  bottom: 0;
  padding: 0 20px 2px;
  background: rgba(255, 255, 255, 0.7);
  color: #333;
  font-size: 38px;
  line-height: 56px;
}
.update {
  padding-top: 42px;
  font-size: 45px;
  line-height: 118px;
  text-align: center;
}
.update a {
  color: #8fc050;
  text-decoration-thickness: 4px;
}
.below {
  height: 68px;
  background: #e1e4ea;
}
.banner {
  position: absolute;
  left: 95px;
  right: 92px;
  bottom: 0;
  display: flex;
  justify-content: flex-end;
  height: 173px;
  background: #f7f7f7;
}
.banner-x {
  display: grid;
  place-items: center;
  width: 59px;
  height: 56px;
  padding-top: 5px;
  background: #fff;
}
.banner-side {
  background: #f5f3f4;
}
.system {
  display: flex;
  align-items: center;
  justify-content: space-between;
  height: 168px;
  padding: 0 312px;
  background: #f1f3f5;
}
.system button {
  width: 64px;
  height: 64px;
}
</style>
